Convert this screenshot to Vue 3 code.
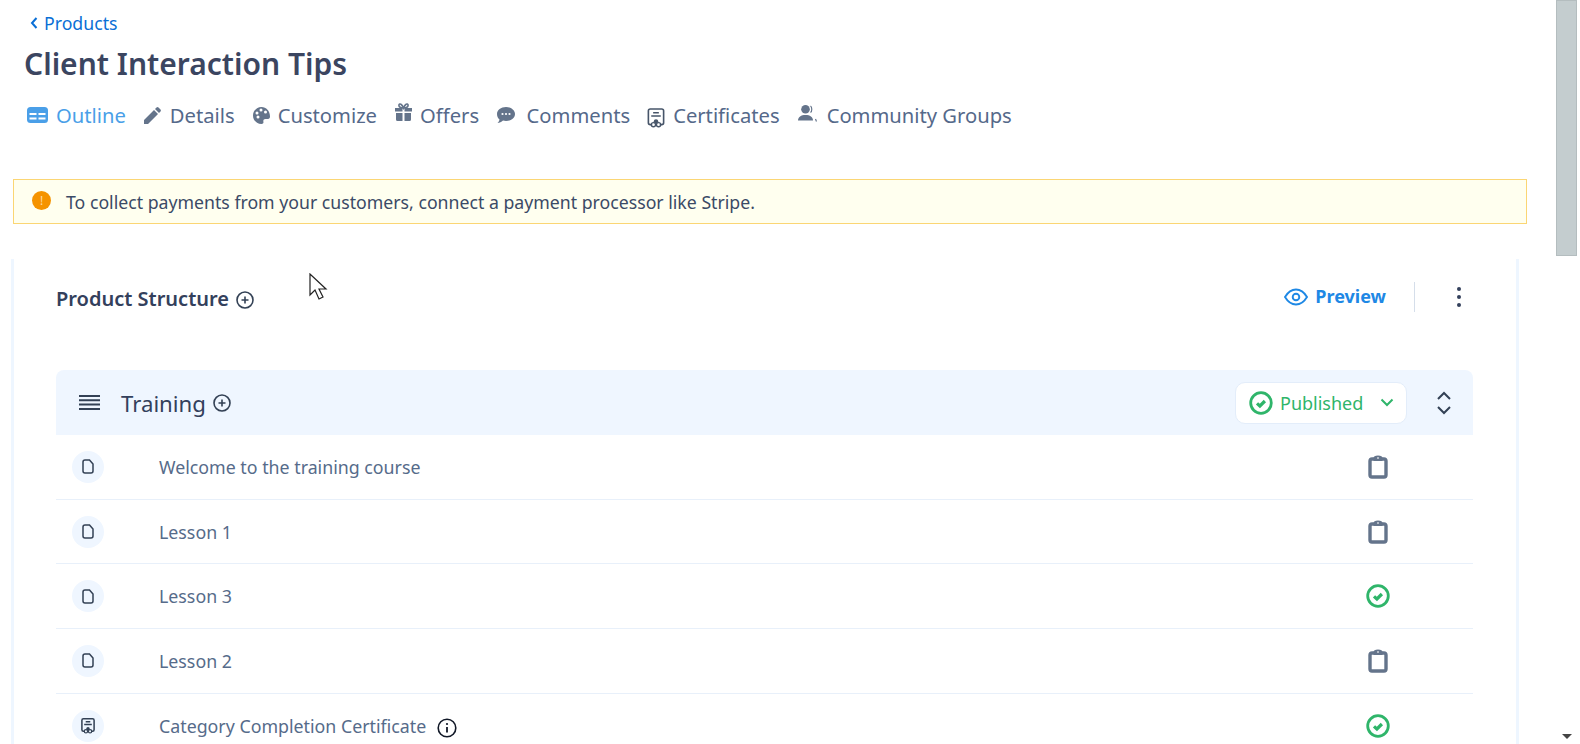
<script setup>
const tabs = [
  { label: 'Outline', icon: 'outline', active: true },
  { label: 'Details', icon: 'pencil' },
  { label: 'Customize', icon: 'palette' },
  { label: 'Offers', icon: 'gift' },
  { label: 'Comments', icon: 'chat' },
  { label: 'Certificates', icon: 'cert' },
  { label: 'Community Groups', icon: 'users' }
]
const rows = [
  { title: 'Welcome to the training course', kind: 'file', status: 'draft' },
  { title: 'Lesson 1', kind: 'file', status: 'draft' },
  { title: 'Lesson 3', kind: 'file', status: 'done' },
  { title: 'Lesson 2', kind: 'file', status: 'draft' },
  { title: 'Category Completion Certificate', kind: 'cert', status: 'done', info: true }
]
</script>

<template>
  <div class="page">
    <main class="main">
      <a class="back">
        <svg width="10" height="14" viewBox="0 0 9 14"><path d="M7 2 2.500 7 7 12" fill="none" stroke="#0a6fd6" stroke-width="2"/></svg>
        <span>Products</span>
      </a>
      <h1 class="title">Client Interaction Tips</h1>
      <nav class="tabs">
        <div v-for="t in tabs" :key="t.label" class="tab" :class="[t.icon, { active: t.active }]">
          <svg v-if="t.icon === 'outline'" class="ti" width="21" height="16" viewBox="0 0 21 16"><rect width="21" height="16" rx="3.500" fill="#4a9fe8"/><path d="M2.500 7h7M11.500 7h7M2.500 11.500h7M11.500 11.500h7" stroke="#fff" stroke-width="2"/></svg>
          <svg v-else-if="t.icon === 'pencil'" class="ti" width="17" height="17" viewBox="0 0 17 17"><path d="M0 17v-4L10 3l4 4L4 17zM11 2l1.500-1.500q1-.8 2 0l2 2q.8 1 0 2L15 6z" fill="#64748b"/></svg>
          <svg v-else-if="t.icon === 'palette'" class="ti" width="17" height="17" viewBox="0 0 17 17"><path fill-rule="evenodd" d="M8.500 0C3.800 0 0 3.800 0 8.500S3.800 17 8.500 17c1.500 0 2.200-1 1.900-2.200-.4-1.500.4-2.800 2-2.800H15c1.300 0 2-1 2-2.500C17 4 13.200 0 8.500 0zM4 7.500a1.500 1.500 0 1 1 0-3 1.500 1.500 0 0 1 0 3zm1 4a1.500 1.500 0 1 1 0-3 1.500 1.500 0 0 1 0 3zm3-7a1.500 1.500 0 1 1 0-3 1.500 1.500 0 0 1 0 3zm4.500 2a1.500 1.500 0 1 1 0-3 1.500 1.500 0 0 1 0 3z" fill="#64748b"/></svg>
          <svg v-else-if="t.icon === 'gift'" class="ti" width="17" height="18" viewBox="0 0 17 18"><path d="M0 5h7.500v3.500H0zM9.500 5H17v3.500H9.500zM1 10h6.500v8H2.500Q1 18 1 16.500zM9.500 10H16v6.500q0 1.500-1.500 1.500h-5z" fill="#64748b"/><path d="M8.500 5C7 1 4.500 0 4 1.800 3.500 4 6 5 8.500 5c2.500 0 5-1 4.500-3.200C12.500 0 10 1 8.500 5z" fill="none" stroke="#64748b" stroke-width="1.600"/></svg>
          <svg v-else-if="t.icon === 'chat'" class="ti" width="18" height="16" viewBox="0 0 18 16"><path d="M9 0c5 0 9 3 9 7s-4 7-9 7c-1 0-2-.1-3-.4C4.500 15 2.500 16 .5 16c1-.8 1.800-2 2-3.400C1 11.300 0 9.300 0 7c0-4 4-7 9-7z" fill="#64748b"/><circle cx="5.500" cy="7" r="1.100" fill="#fff"/><circle cx="9" cy="7" r="1.100" fill="#fff"/><circle cx="12.500" cy="7" r="1.100" fill="#fff"/></svg>
          <svg v-else-if="t.icon === 'cert'" class="ti" width="18" height="20" viewBox="0 0 18 21"><path d="M5 17.500H3q-2 0-2-2V3q0-2 2-2h12q2 0 2 2v12.500q0 2-2 2h-2" fill="none" stroke="#475569" stroke-width="1.700"/><path d="M6 5h6M4 8.500h10" stroke="#475569" stroke-width="1.600"/><circle cx="6.300" cy="17.500" r="2.200" fill="none" stroke="#475569" stroke-width="1.400"/><circle cx="11.700" cy="17.500" r="2.200" fill="none" stroke="#475569" stroke-width="1.400"/><circle cx="9" cy="14" r="2.300" fill="#475569"/></svg>
          <svg v-else class="ti" width="19" height="17" viewBox="0 0 19 17"><circle cx="7.500" cy="4.300" r="4.300" fill="#64748b"/><path d="M0 15.500c0-3.500 3-5.500 7.500-5.500s7.500 2 7.500 5.500z" fill="#64748b"/><path d="M12.500 1c1.700 1 1.700 5.500 0 6.500M17.500 14l1 2.500" fill="none" stroke="#64748b" stroke-width="1.200"/></svg>
          <span>{{ t.label }}</span>
        </div>
      </nav>
      <div class="alert">
        <span class="alert-dot">!</span>
        <span>To collect payments from your customers, connect a payment processor like Stripe.</span>
      </div>
      <section class="card">
        <header class="card-head">
          <div class="struct">
            <h2>Product Structure</h2>
            <svg class="plus" width="18" height="18" viewBox="0 0 18 18"><circle cx="9" cy="9" r="8" fill="none" stroke="#334155" stroke-width="1.600"/><path d="M9 5.500v7M5.500 9h7" stroke="#334155" stroke-width="1.600"/></svg>
          </div>
          <div class="actions">
            <a class="preview">
              <svg width="24" height="18" viewBox="0 0 24 18"><path d="M1 9c3-5 7-7.500 11-7.500S20 4 23 9c-3 5-7 7.500-11 7.500S4 14 1 9z" fill="none" stroke="#1e88e5" stroke-width="1.900"/><circle cx="12" cy="9" r="3.300" fill="none" stroke="#1e88e5" stroke-width="1.900"/></svg>
              <span class="preview-label">Preview</span>
            </a>
            <span class="sep"></span>
            <span class="dots"><i></i><i></i><i></i></span>
          </div>
        </header>
        <div class="section-head">
          <svg width="21" height="15" viewBox="0 0 21 15"><path d="M0 1h21M0 5.300h21M0 9.600h21M0 14h21" stroke="#334155" stroke-width="2"/></svg>
          <span class="section-name">Training</span>
          <svg class="plus" width="18" height="18" viewBox="0 0 18 18"><circle cx="9" cy="9" r="8" fill="none" stroke="#334155" stroke-width="1.600"/><path d="M9 5.500v7M5.500 9h7" stroke="#334155" stroke-width="1.600"/></svg>
          <div class="status">
            <svg width="24" height="24" viewBox="0 0 24 24"><circle cx="12" cy="12" r="10.300" fill="none" stroke="#2fb56a" stroke-width="2.800"/><path d="M8 12.300l2.900 2.700 5-5" fill="none" stroke="#2fb56a" stroke-width="3.200"/></svg>
            <span>Published</span>
            <svg class="caret" width="14" height="9" viewBox="0 0 14 9"><path d="M1.500 1.500 7 7l5.500-5.500" fill="none" stroke="#2fb56a" stroke-width="2"/></svg>
          </div>
          <svg class="updown" width="16" height="24" viewBox="0 0 16 24"><path d="M2 8l6-6 6 6M2 16l6 6 6-6" fill="none" stroke="#334155" stroke-width="2"/></svg>
        </div>
        <div v-for="r in rows" :key="r.title" class="row">
          <span class="badge">
            <svg v-if="r.kind === 'file'" width="12" height="15" viewBox="0 0 12 15"><path d="M1 3q0-2 2-2h4.500L11 5v7q0 2-2 2H3q-2 0-2-2z" fill="none" stroke="#334155" stroke-width="1.500"/></svg>
            <svg v-else width="14" height="16" viewBox="0 0 18 21"><path d="M5 17.500H3q-2 0-2-2V3q0-2 2-2h12q2 0 2 2v12.500q0 2-2 2h-2" fill="none" stroke="#334155" stroke-width="2"/><path d="M6 5h6M4 8.500h10" stroke="#334155" stroke-width="1.800"/><circle cx="6.300" cy="17.500" r="2.200" fill="none" stroke="#334155" stroke-width="1.600"/><circle cx="11.700" cy="17.500" r="2.200" fill="none" stroke="#334155" stroke-width="1.600"/><circle cx="9" cy="14" r="2.300" fill="#334155"/></svg>
          </span>
          <span class="row-title">{{ r.title }}</span>
          <svg v-if="r.info" class="info" width="20" height="20" viewBox="0 0 20 20"><circle cx="10" cy="10" r="8.800" fill="none" stroke="#111827" stroke-width="1.600"/><path d="M10 9v5.500" stroke="#111827" stroke-width="1.800"/><circle cx="10" cy="6" r="1.100" fill="#111827"/></svg>
          <span class="row-status">
            <svg v-if="r.status === 'draft'" width="20" height="24" viewBox="0 0 20 24"><path d="M6 4H4Q2 4 2 6v14q0 2 2 2h12q2 0 2-2V6q0-2-2-2h-2" fill="none" stroke="#64748b" stroke-width="3.400"/><path d="M5.500 3q0-2.500 4.500-2.500T14.500 3v3h-9z" fill="#64748b"/><path d="M9 3h2" stroke="#fff" stroke-width="1"/></svg>
            <svg v-else width="24" height="24" viewBox="0 0 24 24"><circle cx="12" cy="12" r="10.300" fill="none" stroke="#2fb56a" stroke-width="2.800"/><path d="M8 12.300l2.900 2.700 5-5" fill="none" stroke="#2fb56a" stroke-width="3.200"/></svg>
          </span>
        </div>
      </section>
    </main>
    <aside class="scrollbar">
      <div class="thumb"></div>
      <div class="track"></div>
      <div class="arrow"></div>
    </aside>
    <svg class="cursor" width="20" height="28" viewBox="0 0 20 28"><path d="M1 1v21l5-5 4 9 4-2-4-8h7z" fill="#fff" stroke="#222" stroke-width="1.200"/></svg>
  </div>
</template>

<style>
html, body { margin: 0; background: #fff; overflow: hidden; }
</style>

<style scoped>
.page {
  position: relative;
  display: flex;
  height: 744px;
  overflow: hidden;
  font-family: "Noto Sans", "Open Sans", sans-serif;
  background: #fff;
}
.main { flex: 1; min-width: 0; padding: 12px 29px 0 13px; box-sizing: border-box; overflow: hidden; }
.back { display: flex; align-items: center; gap: 5px; margin-left: 16px; height: 22px; color: #0a6fd6; font-size: 17.700px; }
.title { margin: 10px 0 0 11px; font-size: 30px; line-height: 40px; font-weight: 600; color: #3b4560; }
.tabs { display: flex; align-items: center; margin: 16px 0 0 14px; height: 30px; color: #55698a; font-size: 20.200px; }
.tab { display: flex; align-items: center; gap: 8px; margin-right: 18px; white-space: nowrap; }
.tab.active { color: #4a9fe8; }
.tab.pencil { gap: 9px; }
.tab.chat { gap: 11.500px; margin-right: 17px; }
.tab.users { gap: 10px; }
.tab.gift .ti { margin-bottom: 6px; }
.tab.cert .ti { margin-top: 6px; }
.tab.users .ti { margin-bottom: 3px; }
.alert {
  display: flex; align-items: center; gap: 15px;
  box-sizing: border-box; height: 45px; margin-top: 49px; padding: 0 0 0 18px;
  border: 1px solid #fbd674; background: #ffffef; color: #3b4a66; font-size: 17.700px;
}
.alert-dot {
  display: flex; align-items: center; justify-content: center;
  width: 19px; height: 19px; border-radius: 50%;
  background: #f59300; color: #ffd9a0; font-size: 12px; margin-bottom: 3px;
}
.card {
  margin: 35px 8px 0 -2px;
  padding: 0 43px 0 42px;
  border-left: 3px solid #eef6ff; border-right: 3px solid #eef6ff;
}
.card-head { display: flex; align-items: center; justify-content: space-between; height: 77px; margin-bottom: 34px; }
.struct { display: flex; align-items: center; gap: 7px; margin-top: 2px; }
.struct h2 { margin: 0; font-size: 20px; font-weight: 600; color: #33405c; }
.struct .plus { margin-top: 2px; }
.actions { display: flex; align-items: center; margin-top: -1px; }
.preview { display: flex; align-items: center; gap: 7px; color: #1e88e5; font-weight: 700; font-size: 18px; }
.preview-label { margin-bottom: 3px; }
.sep { width: 1px; height: 30px; background: #d5deea; margin: 0 42px 0 28px; }
.dots { display: flex; flex-direction: column; gap: 4px; margin-right: 12px; }
.dots i { width: 4px; height: 4px; border-radius: 50%; background: #33405c; }
.section-head {
  display: flex; align-items: center; height: 65px; padding: 0 21px 0 23px;
  background: #eff6ff; border-radius: 8px 8px 0 0; color: #33405c; box-sizing: border-box;
}
.section-name { font-size: 22.200px; margin: 2px 7px 0 21px; }
.status {
  display: flex; align-items: center; margin-left: auto; box-sizing: border-box;
  width: 172px; height: 42px; padding: 0 13px; gap: 7px;
  background: #fff; border: 1px solid #e3edfa; border-radius: 10px;
  color: #2fb56a; font-size: 18px;
}
.caret { margin-left: auto; margin-right: -1px; }
.updown { margin-left: 29px; }
.row { display: flex; align-items: center; height: 64.700px; padding: 0 16px; border-bottom: 1px solid #e8f0fa; box-sizing: border-box; }
.badge { display: flex; align-items: center; justify-content: center; flex: none; width: 32px; height: 32px; border-radius: 50%; background: #eff6ff; }
.row-title { margin-left: 55px; color: #566b8a; font-size: 17.800px; }
.info { margin-left: 11px; margin-top: 4px; }
.row-status { margin-left: auto; margin-right: 67px; width: 24px; display: flex; justify-content: center; }
.scrollbar { flex: none; width: 24px; display: flex; flex-direction: column; }
.thumb { width: 21px; height: 256px; background: #c4cdcf; border: 1px solid #b4bdbf; box-sizing: border-box; }
.track { flex: 1; }
.arrow { width: 0; height: 0; margin: 0 0 5px 6px; border-left: 5px solid transparent; border-right: 5px solid transparent; border-top: 5px solid #444; }
.cursor { position: absolute; left: 309px; top: 273px; }
</style>
